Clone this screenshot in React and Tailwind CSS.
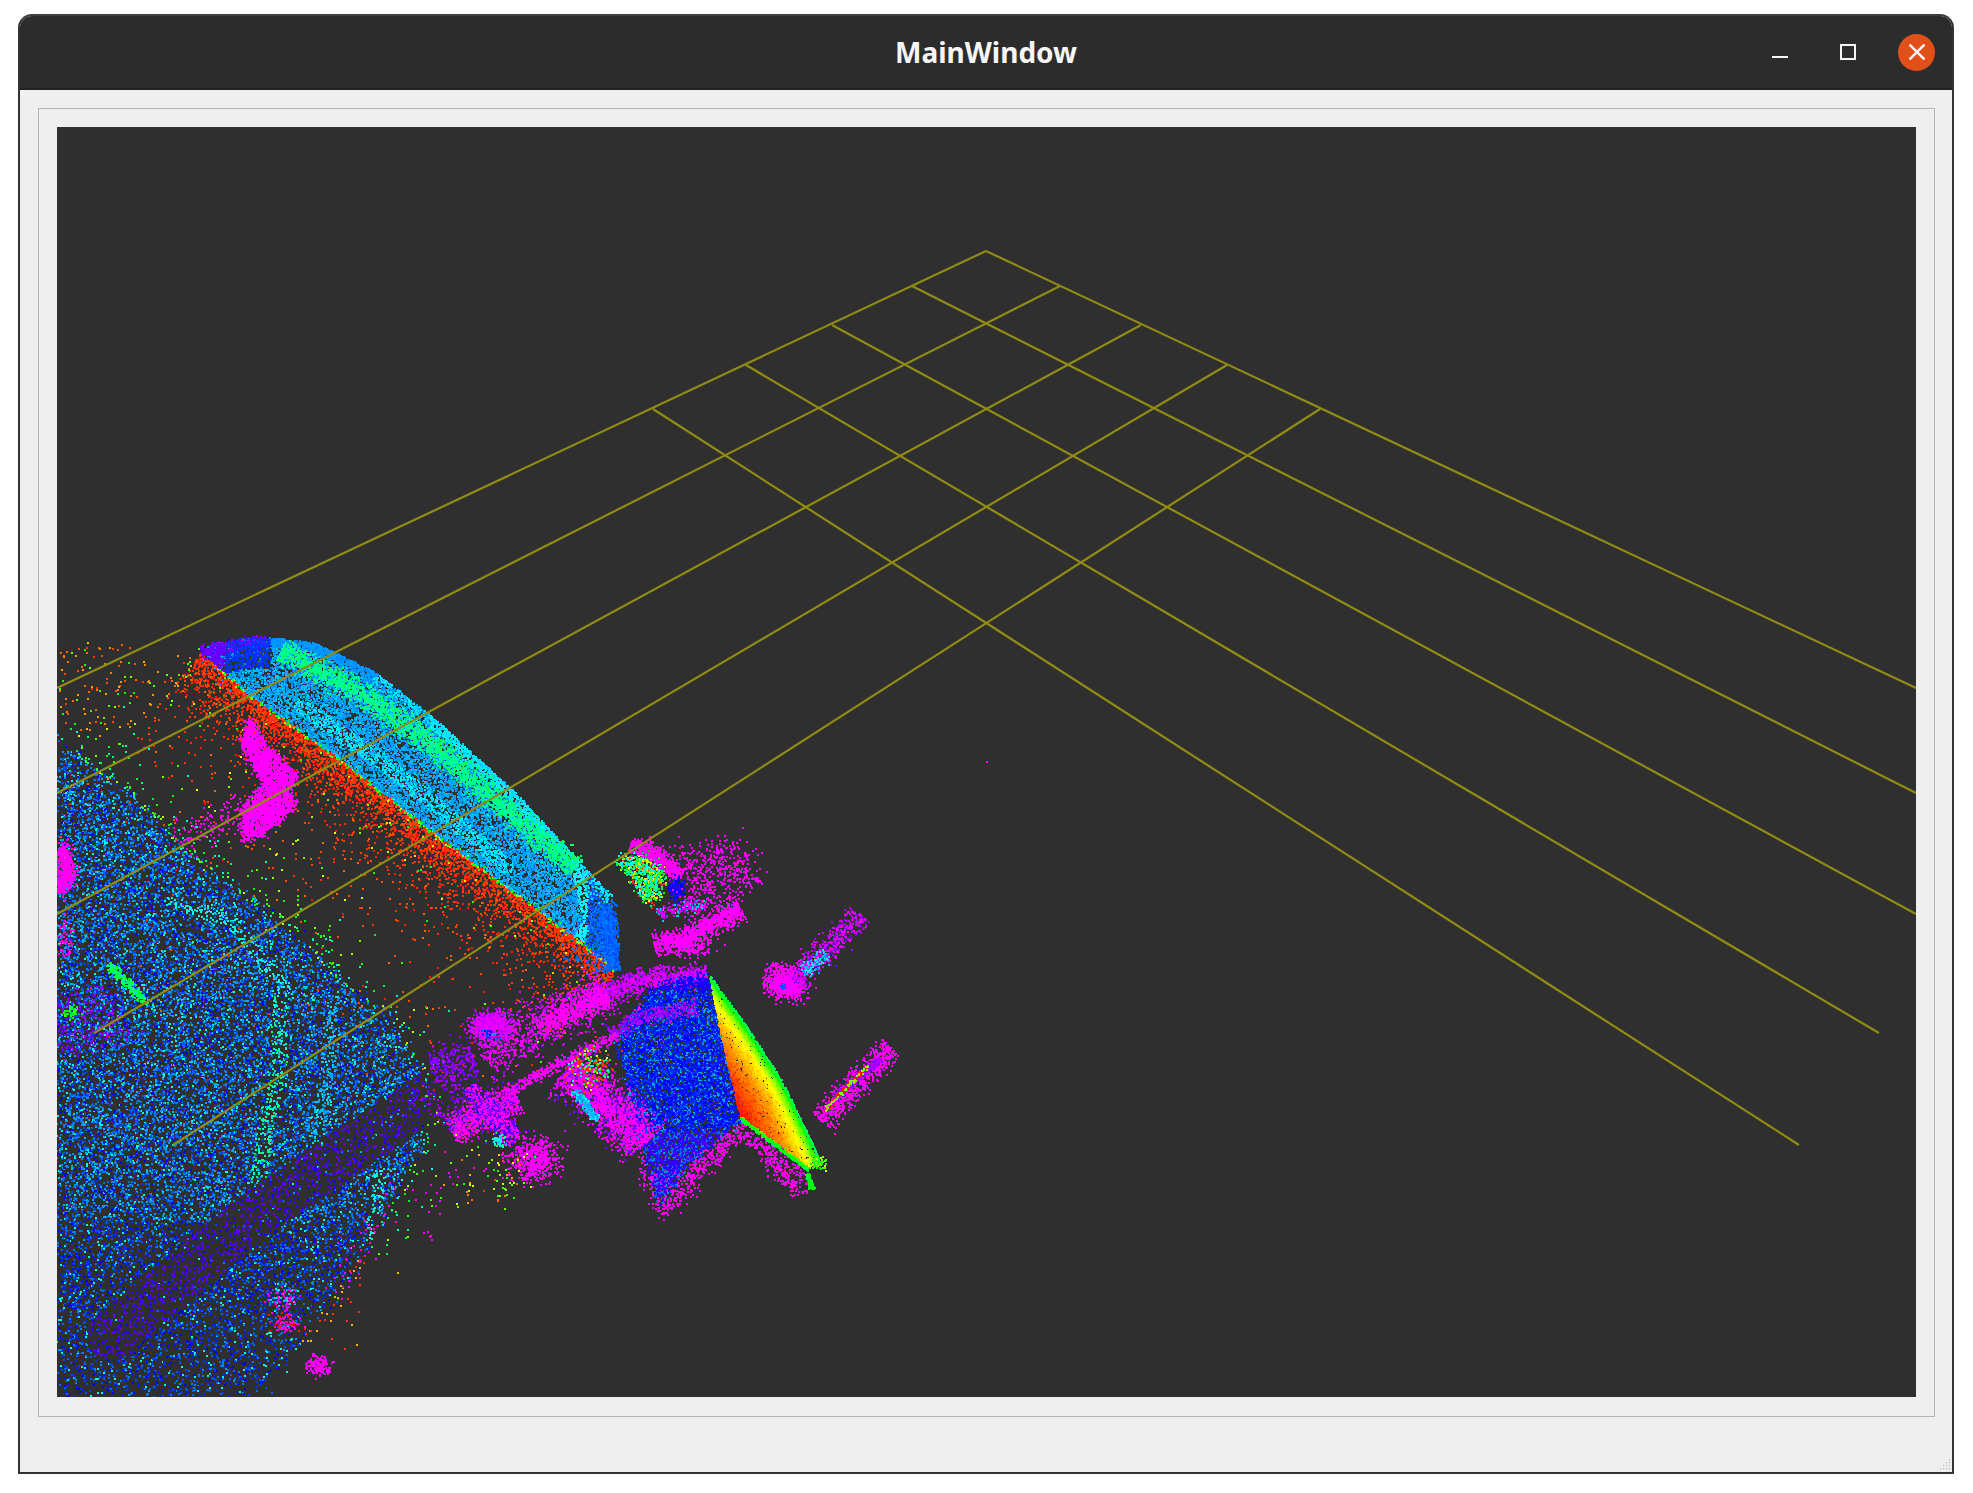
import React, { useMemo } from "react";

// ---- grid of the 3D view, in page pixels ----
const GRID = [
  [986, 251, 1916, 688],
  [912, 286, 1916, 793],
  [832, 325, 1916, 914],
  [746, 365, 1879, 1033],
  [653, 409, 1799, 1145],
  [986, 251, 57, 688],
  [1060, 286, 57, 793],
  [1141, 325, 57, 914],
  [1227, 365, 94, 1033],
  [1320, 409, 173, 1145],
];

// crops were read with origin 430,820 at 3x
const z = (pts) => pts.map(([x, y]) => [430 + x / 3, 820 + y / 3]);

function makeRandom(seed) {
  let a = seed;
  return () => {
    a |= 0;
    a = (a + 0x6d2b79f5) | 0;
    let t = Math.imul(a ^ (a >>> 15), 1 | a);
    t = (t + Math.imul(t ^ (t >>> 7), 61 | t)) ^ t;
    return ((t ^ (t >>> 14)) >>> 0) / 4294967296;
  };
}

function inside(p, poly) {
  let hit = false;
  for (let i = 0, j = poly.length - 1; i < poly.length; j = i++) {
    const [xi, yi] = poly[i];
    const [xj, yj] = poly[j];
    if (yi > p[1] !== yj > p[1] && p[0] < ((xj - xi) * (p[1] - yi)) / (yj - yi) + xi) hit = !hit;
  }
  return hit;
}

function distTo(p, line) {
  let best = 1e9;
  for (let i = 0; i < line.length - 1; i++) {
    const [ax, ay] = line[i];
    const [bx, by] = line[i + 1];
    const dx = bx - ax;
    const dy = by - ay;
    const t = Math.max(0, Math.min(1, ((p[0] - ax) * dx + (p[1] - ay) * dy) / (dx * dx + dy * dy)));
    best = Math.min(best, Math.hypot(p[0] - ax - t * dx, p[1] - ay - t * dy));
  }
  return best;
}

function buildCloud() {
  const r = makeRandom(7);
  const gauss = () => (r() + r() + r() + r() - 2) * 1.22;
  const layers = [];

  const add = (count, sample, hue) => {
    const buckets = {};
    for (let i = 0; i < count; i++) {
      const p = sample();
      const h = ((Math.round(hue(p) / 6) * 6) % 360 + 360) % 360;
      const x = Math.round(p[0]);
      const y = Math.round(p[1]);
      buckets[h] = (buckets[h] || "") + `M${x} ${y}h2v2h-2z`;
    }
    layers.push(buckets);
  };

  const poly = (pts, fuzz = 0) => {
    const xs = pts.map((q) => q[0]);
    const ys = pts.map((q) => q[1]);
    const x0 = Math.min(...xs);
    const x1 = Math.max(...xs);
    const y0 = Math.min(...ys);
    const y1 = Math.max(...ys);
    return () => {
      for (let n = 0; n < 200; n++) {
        const p = [x0 + r() * (x1 - x0), y0 + r() * (y1 - y0)];
        if (inside(p, pts)) return [p[0] + gauss() * fuzz, p[1] + gauss() * fuzz];
      }
      return pts[0];
    };
  };

  // along a polyline; side 0 = both sides gaussian, otherwise one sided exponential falloff
  // side 1 lies to the lower left of a line running down and right
  const band = (line, width, side = 0) => {
    const lens = [];
    let total = 0;
    for (let i = 0; i < line.length - 1; i++) {
      const l = Math.hypot(line[i + 1][0] - line[i][0], line[i + 1][1] - line[i][1]);
      lens.push(l);
      total += l;
    }
    return () => {
      let d = r() * total;
      let i = 0;
      while (i < lens.length - 1 && d > lens[i]) d -= lens[i++];
      const dx = (line[i + 1][0] - line[i][0]) / lens[i];
      const dy = (line[i + 1][1] - line[i][1]) / lens[i];
      const off = side === 0 ? gauss() * width : side * -Math.log(1 - r() * 0.999) * width;
      return [line[i][0] + dx * d - dy * off, line[i][1] + dy * d + dx * off];
    };
  };

  const blob = (cx, cy, rx, ry = rx) => () => [cx + gauss() * rx, cy + gauss() * ry];
  const flat = (h, spread = 0) => () => h + (r() - 0.5) * spread;

  // ---- left shell ----
  const shell = [
    [57, 742], [126, 793], [201, 868], [283, 925], [340, 981], [390, 1019], [425, 1082],
    [420, 1145], [365, 1246], [258, 1397], [57, 1397],
  ];
  const stripes = [
    { line: [[277, 1000], [280, 1067], [263, 1133], [257, 1193]], w: 8, h: 160 },
    { line: [[333, 1000], [327, 1067], [310, 1160]], w: 8, h: 195 },
    { line: [[380, 1173], [370, 1240]], w: 6, h: 172 },
    { line: [[170, 900], [230, 920], [283, 985], [278, 1000]], w: 7, h: 178 },
  ];
  const purple = [[428, 1095], [250, 1217], [110, 1335]];
  const sampleShell = poly(shell, 7);
  add(
    18500,
    () => {
      for (;;) {
        const p = sampleShell();
        const keep = distTo(p, purple) < 24 ? 0.5 : p[1] > 1150 ? 1 - (p[1] - 1150) / 400 : 1;
        if (r() < keep) return p;
      }
    },
    (p) => {
      if (distTo(p, purple) < 24 && r() < 0.88) return 246 + r() * 20;
      for (const s of stripes) if (distTo(p, s.line) < s.w && r() < 0.7) return s.h + (r() - 0.5) * 20;
      const base = p[1] > 1220 ? 222 : 210;
      const roll = r();
      if (roll < 0.13) return 176;
      if (roll < 0.25) return 238;
      return base + (r() - 0.5) * 32;
    }
  );
  add(500, poly([[57, 850], [66, 842], [74, 880], [57, 895]], 4), flat(300, 10));
  add(260, poly([[57, 987], [110, 985], [130, 1040], [57, 1060]], 5), flat(268, 20));
  add(260, band([[107, 963], [147, 1003]], 3), flat(135, 40));
  add(40, blob(70, 1010, 5), flat(120, 50));
  add(50, blob(65, 940, 6, 14), flat(300));
  add(220, band([[57, 742], [126, 793], [201, 868], [283, 925], [340, 981]], 16, -1), () => 70 + r() * 110);
  add(90, band([[340, 981], [390, 1019], [425, 1082], [420, 1145], [365, 1246]], 12, -1), () => 70 + r() * 120);
  add(40, band([[365, 1246], [300, 1340]], 14, -1), () => (r() < 0.5 ? 10 : 40));

  // little patches at the foot of the shell
  add(70, blob(281, 1298, 11, 8), () => (r() < 0.6 ? 305 : 190));
  add(80, blob(284, 1322, 11, 8), () => (r() < 0.7 ? 305 : 8));
  add(150, blob(317, 1365, 9, 7), flat(300, 8));
  add(40, band([[390, 1180], [333, 1300]], 14), flat(300, 30));

  // ---- red floor under the dome ----
  const edge = [[201, 652], [250, 695], [337, 757], [440, 837], [541, 912], [617, 969]];
  add(3600, band(edge, 14, 1), () => 6 + r() * 10);
  add(900, band(edge, 62, 1), () => (r() < 0.88 ? 6 + r() * 18 : 50 + r() * 70));
  add(130, poly([[57, 640], [200, 645], [180, 700], [100, 740], [57, 720]]), () => (r() < 0.7 ? 12 + r() * 30 : 90 + r() * 30));
  add(380, band(edge, 2.2), () => 70 + r() * 60);

  // ---- dome ----
  const arc = [[201, 648], [240, 638], [270, 637], [315, 642], [377, 673], [440, 723], [516, 793], [591, 874], [617, 906], [619, 969]];
  const green = [[280, 650], [356, 690], [433, 745], [509, 812], [575, 868]];
  const cyan = [[300, 705], [383, 762], [447, 815], [505, 865]];
  const rib = [[577, 870], [587, 920], [577, 940]];
  const dome = [...arc, ...[...edge].reverse()];
  const domeHue = (p) => {
    const d = distTo(p, arc);
    if (p[0] > 587) return 208 + r() * 14;
    if (distTo(p, rib) < 5) return 180;
    if (distTo(p, cyan) < 8 && r() < 0.7) return 180 + r() * 8;
    if (p[0] < 270 && d < 30) return p[0] < 225 ? 262 : 228;
    if (d < 9) return p[0] > 430 ? 186 : 202;
    return 190 + r() * 18;
  };
  add(900, band([[205, 646], [240, 638], [270, 637], [315, 642], [377, 673]], 9, 1), flat(206, 10));
  add(400, band([[201, 652], [230, 645], [265, 642]], 5), flat(262, 30));
  add(900, band([[610, 905], [619, 969]], 10, 1), flat(215, 8));
  add(12000, poly(dome), domeHue);
  add(800, band([[377, 673], [440, 723], [516, 793], [591, 874], [612, 895]], 6, 1), flat(186, 10));
  add(2600, band(green, 8), flat(150, 14));

  // magenta patch on the floor
  add(2600, poly([[247, 720], [253, 720], [263, 743], [297, 773], [287, 790], [297, 803], [263, 833], [242, 842], [242, 807], [263, 783], [240, 743]], 3), flat(300, 4));
  add(130, band([[175, 840], [245, 810]], 14), flat(300, 8));

  // ---- things on the right ----
  // upper cluster
  add(620, poly(z([[560, 110], [640, 100], [700, 150], [690, 230], [640, 240], [600, 170]]), 5), () => {
    const k = r();
    return k < 0.4 ? 100 + r() * 60 : k < 0.7 ? 50 + r() * 30 : k < 0.85 ? 10 : 180;
  });
  add(500, band(z([[600, 70], [660, 90], [750, 165]]), 6), flat(300, 6));
  add(130, blob(676, 888, 5, 8), flat(240, 20));
  add(520, poly(z([[720, 90], [930, 50], [990, 180], [910, 270], [780, 300], [740, 240], [770, 170]]), 8), flat(300, 10));
  add(1000, band(z([[670, 375], [780, 345], [930, 265]]), 7), flat(300, 4));
  add(180, blob(688, 945, 16, 8), flat(300, 4));
  add(140, band(z([[680, 280], [820, 250]]), 5), () => (r() < 0.4 ? 190 : 290));

  // blob on the right of the dome
  add(800, blob(785, 982, 14, 11), flat(300, 6));
  add(500, band(z([[1090, 480], [1290, 280]]), 9), flat(285, 30));
  add(90, band(z([[1110, 460], [1190, 400]]), 5), flat(190, 30));
  add(20, blob(781, 985, 2), flat(220, 10));

  // thin streak
  add(650, band(z([[1170, 900], [1380, 680]]), 9), flat(300, 8));
  add(220, band(z([[1210, 830], [1350, 715]]), 3), flat(275, 20));
  add(120, band(z([[1180, 870], [1310, 735]]), 1.5), () => (r() < 0.65 ? 5 : 90));

  // magenta skirt below the body
  add(850, poly(z([[600, 970], [690, 1190], [740, 1160], [930, 950], [1110, 1140], [1130, 1060], [930, 900], [760, 1040], [660, 1060]]), 5), flat(300, 10));

  // purple arch
  add(1100, band(z([[480, 530], [650, 475], [830, 465]]), 8), flat(285, 20));

  // blue body, thins out towards the tail
  const bodyPoly = z([[835, 460], [870, 640], [930, 900], [760, 1040], [690, 1150], [670, 1100], [610, 900], [570, 700], [560, 640], [640, 530], [700, 480]]);
  add(7600, poly(bodyPoly, 3), (p) => {
    const k = r();
    if (p[0] < 640 && p[1] < 1010 && k < 0.3) return 300;
    if (p[1] > 1130) return k < 0.5 ? 250 : 206 + r() * 14;
    if (p[1] < 990) return k < 0.1 ? 210 : 240 + r() * 8;
    return k < 0.36 ? 196 + r() * 14 : 226 + r() * 14;
  });
  add(360, band(z([[540, 640], [620, 590], [800, 560]]), 6), flat(275, 20));

  // wedge, hue runs from green on the rim to red in the middle
  const rim = z([[835, 460], [950, 620], [1060, 790], [1165, 1010]]);
  const foot = z([[930, 900], [1130, 1050]]);
  const wedge = z([[835, 460], [950, 620], [1060, 790], [1165, 1010], [1130, 1050], [930, 900], [870, 640]]);
  add(7000, poly(wedge), (p) => {
    const a = distTo(p, rim);
    const b = distTo(p, foot);
    if (b < 3.5) return 120 - b * 10 + r() * 20;
    const jitter = (r() - 0.5) * 16;
    if (a < 4) return 140 - a * 10 + jitter;
    if (a < 11) return 100 - (a - 4) * 6 + jitter;
    if (a < 26) return 58 - (a - 11) * 1.9 + jitter;
    return Math.max(4, 30 - (a - 26) * 1.2 + jitter);
  });
  add(130, band(z([[1130, 1060], [1145, 1105]]), 1.5), flat(120, 12));
  add(60, blob(818, 1162, 5), () => 60 + r() * 70);

  // magenta frame on the left of the body
  add(1000, band(z([[150, 700], [320, 620], [530, 500]]), 18), flat(292, 24));
  add(500, band(z([[320, 620], [530, 525]]), 8), flat(300, 8));
  add(800, blob(490, 1025, 14, 10), flat(288, 16));
  add(30, blob(489, 1033, 6, 3), flat(220, 40));
  add(450, band(z([[220, 820], [400, 720], [560, 640]]), 4), flat(298, 10));
  add(2000, band(z([[400, 750], [520, 840], [640, 970]]), 17), () => (r() < 0.55 ? 300 : 268 + r() * 10));
  add(200, band(z([[430, 810], [500, 900]]), 3), flat(190, 24));
  add(180, band(z([[440, 700], [520, 780]]), 16), () => (r() < 0.55 ? 10 : 60 + r() * 140));
  add(1000, band(z([[60, 930], [150, 880], [260, 830]]), 10), flat(302, 4));
  add(600, band(z([[110, 800], [260, 960]]), 8), () => (r() < 0.35 ? 300 : 248 + r() * 18));
  add(50, blob(498, 1140, 5, 4), flat(170, 50));
  add(550, blob(533, 1158, 18, 15), flat(298, 10));
  add(280, band(z([[0, 750], [130, 710]]), 16), flat(272, 20));
  add(300, band(z([[20, 900], [60, 850], [260, 860]]), 22), flat(272, 24));
  add(70, band(z([[60, 1000], [300, 1060], [0, 1150]]), 18), () => 10 + r() * 110);
  add(25, band([[410, 1235], [470, 1150]], 20), flat(300, 10));

  add(1, () => [986, 761], flat(300));
  return layers;
}

function Cloud() {
  const layers = useMemo(buildCloud, []);
  return (
    <svg viewBox="57 127 1859 1270" className="block w-[1859px] h-[1270px]" shapeRendering="crispEdges">
      {layers.map((buckets, i) => (
        <g key={i}>
          {Object.entries(buckets).map(([hue, d]) => (
            <path key={hue} d={d} fill={`hsl(${hue} 100% 50%)`} />
          ))}
        </g>
      ))}
      <g stroke="#908c14" strokeWidth="2.2" shapeRendering="auto">
        {GRID.map(([x1, y1, x2, y2], i) => (
          <line key={i} x1={x1} y1={y1} x2={x2} y2={y2} />
        ))}
      </g>
    </svg>
  );
}

function ResizeGrip() {
  const dots = [];
  for (let row = 0; row < 4; row++) {
    for (let col = 3 - row; col < 4; col++) {
      dots.push(<rect key={`${row}-${col}`} x={col * 3} y={row * 3} width="1.2" height="1.2" />);
    }
  }
  return (
    <svg className="absolute right-[1px] bottom-[2px] w-[11px] h-[11px]" viewBox="0 0 11 11" fill="#b9b9b9">
      {dots}
    </svg>
  );
}

function TitleBar() {
  return (
    <div className="h-[74px] grid grid-cols-[1fr_auto_1fr] items-center bg-[#2c2c2c] border-b-2 border-[#232323] shrink-0">
      <div />
      <div className="text-[28px] font-bold text-[#f6f6f6] font-['Noto_Sans',sans-serif]">MainWindow</div>
      <div className="flex items-center justify-end pr-[17px]">
        <div className="w-4 h-4 flex items-end">
          <div className="w-4 h-[2px] mb-[2px] bg-[#f6f6f6]" />
        </div>
        <div className="w-4 h-4 ml-[52px] border-2 border-[#f6f6f6]" />
        <div className="w-[37px] h-[37px] ml-[42px] rounded-full bg-[#e2501a] flex items-center justify-center">
          <svg viewBox="0 0 16 16" className="w-4 h-4" stroke="#f8f8f8" strokeWidth="2.4">
            <line x1="0.5" y1="0.5" x2="15.5" y2="15.5" />
            <line x1="15.5" y1="0.5" x2="0.5" y2="15.5" />
          </svg>
        </div>
      </div>
    </div>
  );
}

export default function App() {
  return (
    <div className="w-[1973px] h-[1493px] bg-white pt-[14px] pl-[18px]">
      <div className="w-[1936px] h-[1460px] flex flex-col rounded-t-[14px] overflow-hidden border-2 border-[#333333] border-t-[#3e3e3e] bg-[#efefef]">
        <TitleBar />
        <div className="relative flex-1">
          <div className="mt-[18px] ml-[18px] mr-[17px] h-[1309px] border border-[#b5b5b5] p-[18px]">
            <div className="w-[1859px] h-[1270px] bg-[#2f2f2f] overflow-hidden">
              <Cloud />
            </div>
          </div>
          <ResizeGrip />
        </div>
      </div>
    </div>
  );
}
